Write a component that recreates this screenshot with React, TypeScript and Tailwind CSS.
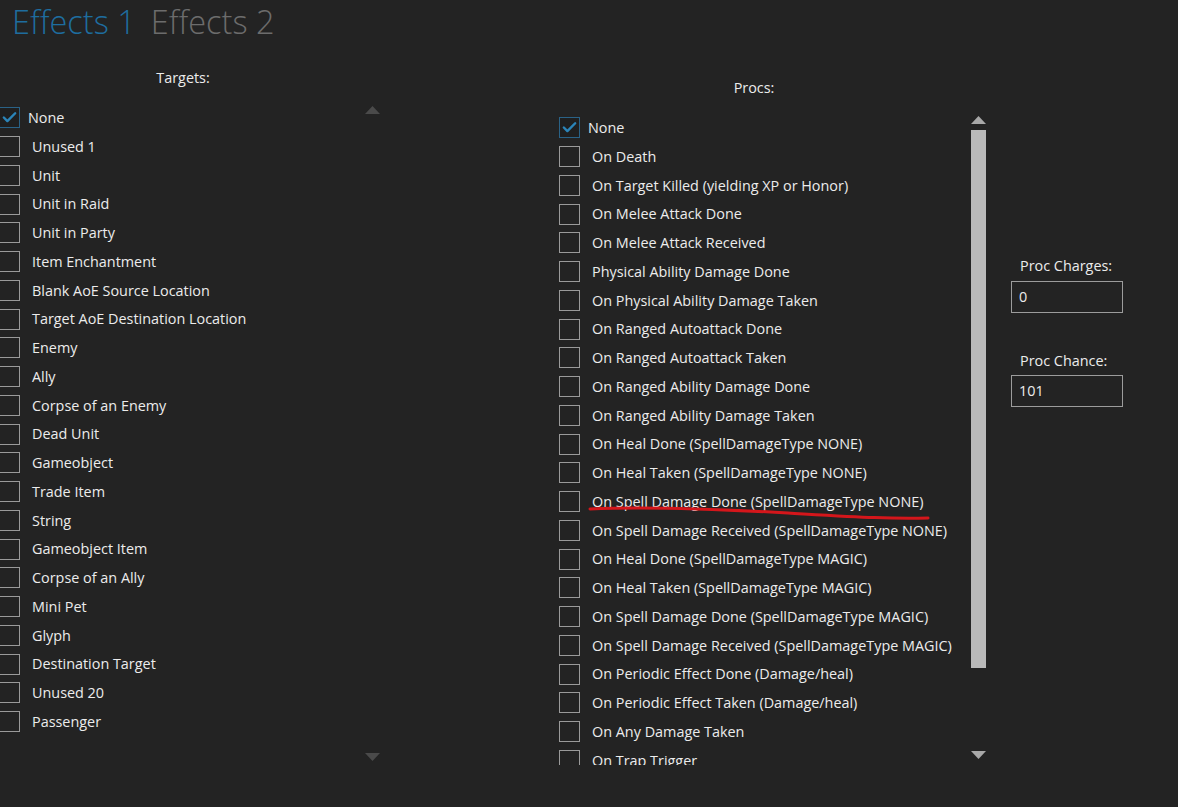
import { Check } from "lucide-react";

const targets = [
  "None",
  "Unused 1",
  "Unit",
  "Unit in Raid",
  "Unit in Party",
  "Item Enchantment",
  "Blank AoE Source Location",
  "Target AoE Destination Location",
  "Enemy",
  "Ally",
  "Corpse of an Enemy",
  "Dead Unit",
  "Gameobject",
  "Trade Item",
  "String",
  "Gameobject Item",
  "Corpse of an Ally",
  "Mini Pet",
  "Glyph",
  "Destination Target",
  "Unused 20",
  "Passenger",
];

const procs = [
  "None",
  "On Death",
  "On Target Killed (yielding XP or Honor)",
  "On Melee Attack Done",
  "On Melee Attack Received",
  "Physical Ability Damage Done",
  "On Physical Ability Damage Taken",
  "On Ranged Autoattack Done",
  "On Ranged Autoattack Taken",
  "On Ranged Ability Damage Done",
  "On Ranged Ability Damage Taken",
  "On Heal Done (SpellDamageType NONE)",
  "On Heal Taken (SpellDamageType NONE)",
  "On Spell Damage Done (SpellDamageType NONE)",
  "On Spell Damage Received (SpellDamageType NONE)",
  "On Heal Done (SpellDamageType MAGIC)",
  "On Heal Taken (SpellDamageType MAGIC)",
  "On Spell Damage Done (SpellDamageType MAGIC)",
  "On Spell Damage Received (SpellDamageType MAGIC)",
  "On Periodic Effect Done (Damage/heal)",
  "On Periodic Effect Taken (Damage/heal)",
  "On Any Damage Taken",
  "On Trap Trigger",
];

const CheckRow = ({ label, checked }: { label: string; checked: boolean }) => (
  <div className="flex h-[28.76px] shrink-0 items-center">
    <div
      className={
        checked
          ? "flex h-[21px] w-[21px] shrink-0 items-center justify-center border border-[#2a6286] bg-[#1f1f1f]"
          : "h-[21px] w-[21px] shrink-0 border border-[#9a9a9a]"
      }
    >
      {checked && <Check className="h-[17px] w-[17px] text-[#2b84b8]" strokeWidth={3.4} />}
    </div>
    <span className={checked ? "ml-[8px] whitespace-nowrap" : "ml-[12px] whitespace-nowrap"}>
      {label}
    </span>
  </div>
);

const Arrow = ({ up, color }: { up: boolean; color: string }) => (
  <svg width="15" height="8" viewBox="0 0 15 8" className={color}>
    <polygon points={up ? "7.5,0 15,8 0,8" : "0,0 15,0 7.5,8"} fill="currentColor" />
  </svg>
);

export default function App() {
  return (
    <div
      className="h-[807px] w-[1178px] overflow-hidden bg-[#232323] text-[14.4px] text-[#ececec]"
      style={{ fontFamily: '"Open Sans", "Noto Sans", sans-serif' }}
    >
      {/* tab header */}
      <div className="flex h-[44px] items-center gap-[15px] pl-[12px] text-[32.5px] font-light leading-none">
        <span className="text-[#1e6d9f]">Effects 1</span>
        <span className="text-[#6c6c6c]">Effects 2</span>
      </div>

      <div className="flex">
        {/* targets */}
        <div className="flex w-[385px] shrink-0 flex-col pt-[23px]">
          <div className="w-[366px] text-center">Targets:</div>
          <div className="mt-[15px] flex">
            <div className="-ml-px flex w-[364px] flex-col">
              {targets.map((t, i) => (
                <CheckRow key={t} label={t} checked={i === 0} />
              ))}
            </div>
            <div className="flex h-[657px] w-[18px] flex-col items-center justify-between pt-[2px]">
              <Arrow up color="text-[#4a4a4a]" />
              <Arrow up={false} color="text-[#4a4a4a]" />
            </div>
          </div>
        </div>

        {/* procs */}
        <div className="ml-[174px] flex w-[430px] shrink-0 flex-col pt-[33px]">
          <div className="w-[390px] text-center">Procs:</div>
          <div className="relative mt-[15px] flex">
            <div className="flex h-[651px] w-[411px] flex-col overflow-hidden">
              {procs.map((p, i) => (
                <CheckRow key={p} label={p} checked={i === 0} />
              ))}
            </div>
            <div className="flex w-[16px] flex-col items-center pt-[2px]">
              <Arrow up color="text-[#a8a8a8]" />
              <div className="mt-[6px] h-[538px] w-[15px] bg-[#b9b9b9]" />
              <div className="mt-[83px]">
                <Arrow up={false} color="text-[#a8a8a8]" />
              </div>
            </div>
            {/* red marker underline */}
            <svg
              className="pointer-events-none absolute left-[29px] top-[388px]"
              width="345"
              height="24"
              viewBox="0 0 345 24"
            >
              <path
                d="M2 7 C 60 4, 130 7, 200 11 S 300 17, 340 16"
                stroke="#d4161b"
                strokeWidth="3"
                fill="none"
                strokeLinecap="round"
              />
            </svg>
          </div>
        </div>

        {/* right column */}
        <div className="ml-[22px] flex flex-col pt-[211px]">
          <div className="pl-[9px]">Proc Charges:</div>
          <div className="mt-[4px] flex h-[32px] w-[112px] items-center border border-[#9c9c9c] pl-[7px]">0</div>
          <div className="mt-[37px] pl-[9px]">Proc Chance:</div>
          <div className="mt-[4px] flex h-[32px] w-[112px] items-center border border-[#9c9c9c] pl-[7px]">101</div>
        </div>
      </div>
    </div>
  );
}
